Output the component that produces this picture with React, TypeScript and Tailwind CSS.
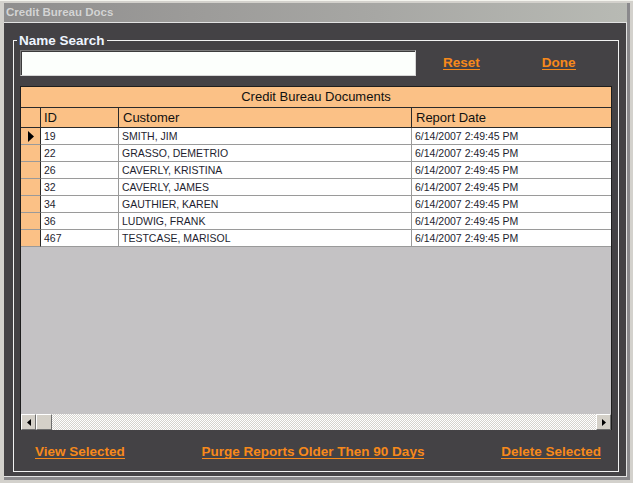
import React from 'react';

interface DocRow {
  id: string;
  customer: string;
  date: string;
}

const rows: DocRow[] = [
  { id: '19', customer: 'SMITH, JIM', date: '6/14/2007 2:49:45 PM' },
  { id: '22', customer: 'GRASSO, DEMETRIO', date: '6/14/2007 2:49:45 PM' },
  { id: '26', customer: 'CAVERLY, KRISTINA', date: '6/14/2007 2:49:45 PM' },
  { id: '32', customer: 'CAVERLY, JAMES', date: '6/14/2007 2:49:45 PM' },
  { id: '34', customer: 'GAUTHIER, KAREN', date: '6/14/2007 2:49:45 PM' },
  { id: '36', customer: 'LUDWIG, FRANK', date: '6/14/2007 2:49:45 PM' },
  { id: '467', customer: 'TESTCASE, MARISOL', date: '6/14/2007 2:49:45 PM' },
];

const font = "font-['Liberation_Sans',Arial,sans-serif]";

const LinkButton: React.FC<{ label: string; className?: string }> = ({ label, className = '' }) => (
  <span
    className={`inline-block cursor-pointer text-[13.5px] leading-[13px] font-bold text-[#f7891b] border-b border-[#f7891b] whitespace-nowrap ${className}`}
  >
    {label}
  </span>
);

const ScrollButton: React.FC<{ dir: 'left' | 'right' }> = ({ dir }) => (
  <div className="w-[15px] h-[16px] bg-[#d4d0c8] border border-t-white border-l-white border-b-[#6f6f6f] border-r-[#6f6f6f] flex items-center justify-center">
    <svg width="4" height="7" viewBox="0 0 4 7">
      {dir === 'left' ? <polygon points="4,0 0,3.5 4,7" fill="#000" /> : <polygon points="0,0 4,3.5 0,7" fill="#000" />}
    </svg>
  </div>
);

export default function App() {
  return (
    <div className={`w-[633px] h-[483px] bg-[#d3d1cc] border-t border-[#f4f4ee] pt-[2px] pl-[4px] pr-[3px] pb-[3px] flex flex-col ${font}`}>
      <div className="flex-1 flex flex-col border-r-[3px] border-b-[3px] border-[#8a898c]">
        {/* title bar */}
        <div className="h-[19px] shrink-0 bg-[linear-gradient(to_right,#8f8e8e,#9c9b99_30%,#a7a7a4_60%,#b8bab4)] flex items-center pl-[2px]">
          <span className="text-[11.5px] font-bold text-[#d4d4d4] [text-shadow:0_0_1px_#8a8a8a]">Credit Bureau Docs</span>
        </div>

        <div className="flex-1 flex flex-col bg-[#444245] border-t border-r border-b border-[#e2e2e2] border-l-0">
          <fieldset className="flex-1 flex flex-col mt-[10px] mb-[4px] ml-[9px] mr-[7px] border border-[#f2f2f2] p-0">
            <legend className="ml-[3px] px-[2px] text-[13.5px] leading-[15px] font-bold text-[#eef5ff]">Name Search</legend>

            <div className="flex-1 flex flex-col px-[6px]">
              <div className="flex items-center mt-[2px]">
                <input
                  className="w-[396px] h-[26px] bg-[#fcfffc] border border-t-[#7c7c7c] border-l-[#7c7c7c] border-b-[#d6d6d6] border-r-[#d6d6d6] shadow-[inset_1px_1px_0_#3c3c3c] outline-none px-[3px] text-[12px]"
                  defaultValue=""
                />
                <LinkButton label="Reset" className="ml-[27px]" />
                <LinkButton label="Done" className="ml-[62px]" />
              </div>

              {/* grid */}
              <div className="mt-[10px] h-[344px] flex flex-col border-l border-t border-r border-[#1e1e1e] bg-[#c4c2c4]">
                <div className="h-[21px] shrink-0 bg-[#fbc186] border-b border-[#2a2a2a] flex items-center justify-center text-[13px] text-[#111]">
                  Credit Bureau Documents
                </div>
                <div className="h-[20px] shrink-0 bg-[#fbc186] border-b border-[#2a2a2a] flex text-[13px] text-[#111] pt-[1px]">
                  <div className="w-[20px] border-r border-[#2a2a2a] -mt-[1px]" />
                  <div className="w-[78px] border-r border-[#2a2a2a] -mt-[1px] pt-[1px] pl-[3px] flex items-center">ID</div>
                  <div className="w-[293px] border-r border-[#2a2a2a] -mt-[1px] pt-[1px] pl-[4px] flex items-center">Customer</div>
                  <div className="flex-1 pl-[4px] flex items-center">Report Date</div>
                </div>

                {rows.map((r, i) => (
                  <div key={r.id} className="h-[17px] shrink-0 flex text-[10.5px] text-[#1e1e30]">
                    <div className="w-[20px] bg-[#fbc186] border-r border-[#2a2a2a] border-b border-b-[#9a9a9a] flex items-center justify-center">
                      {i === 0 && (
                        <svg width="6" height="11" viewBox="0 0 6 11">
                          <polygon points="0,0 6,5.5 0,11" fill="#000" />
                        </svg>
                      )}
                    </div>
                    <div className="w-[78px] bg-white border-r border-b border-[#9a9a9a] pl-[3px] pt-[1px] flex items-center">{r.id}</div>
                    <div className="w-[293px] bg-white border-r border-b border-[#9a9a9a] pl-[3px] pt-[1px] flex items-center">{r.customer}</div>
                    <div className="flex-1 bg-white border-b border-[#9a9a9a] pl-[3px] pt-[1px] flex items-center">{r.date}</div>
                  </div>
                ))}

                <div className="flex-1" />

                {/* horizontal scrollbar */}
                <div className="h-[16px] shrink-0 flex bg-[repeating-conic-gradient(#ffffff_0%_25%,#d6d3ce_0%_50%)] bg-[length:2px_2px]">
                  <ScrollButton dir="left" />
                  <div className="w-[16px] h-[16px] bg-[#d4d0c8] border border-t-white border-l-white border-b-[#6f6f6f] border-r-[#6f6f6f]" />
                  <div className="flex-1" />
                  <ScrollButton dir="right" />
                </div>
              </div>

              <div className="flex items-center justify-between mt-[15px] pl-[15px] pr-[11px]">
                <LinkButton label="View Selected" />
                <LinkButton label="Purge Reports Older Then 90 Days" />
                <LinkButton label="Delete Selected" />
              </div>
            </div>
          </fieldset>
        </div>
      </div>
    </div>
  );
}
